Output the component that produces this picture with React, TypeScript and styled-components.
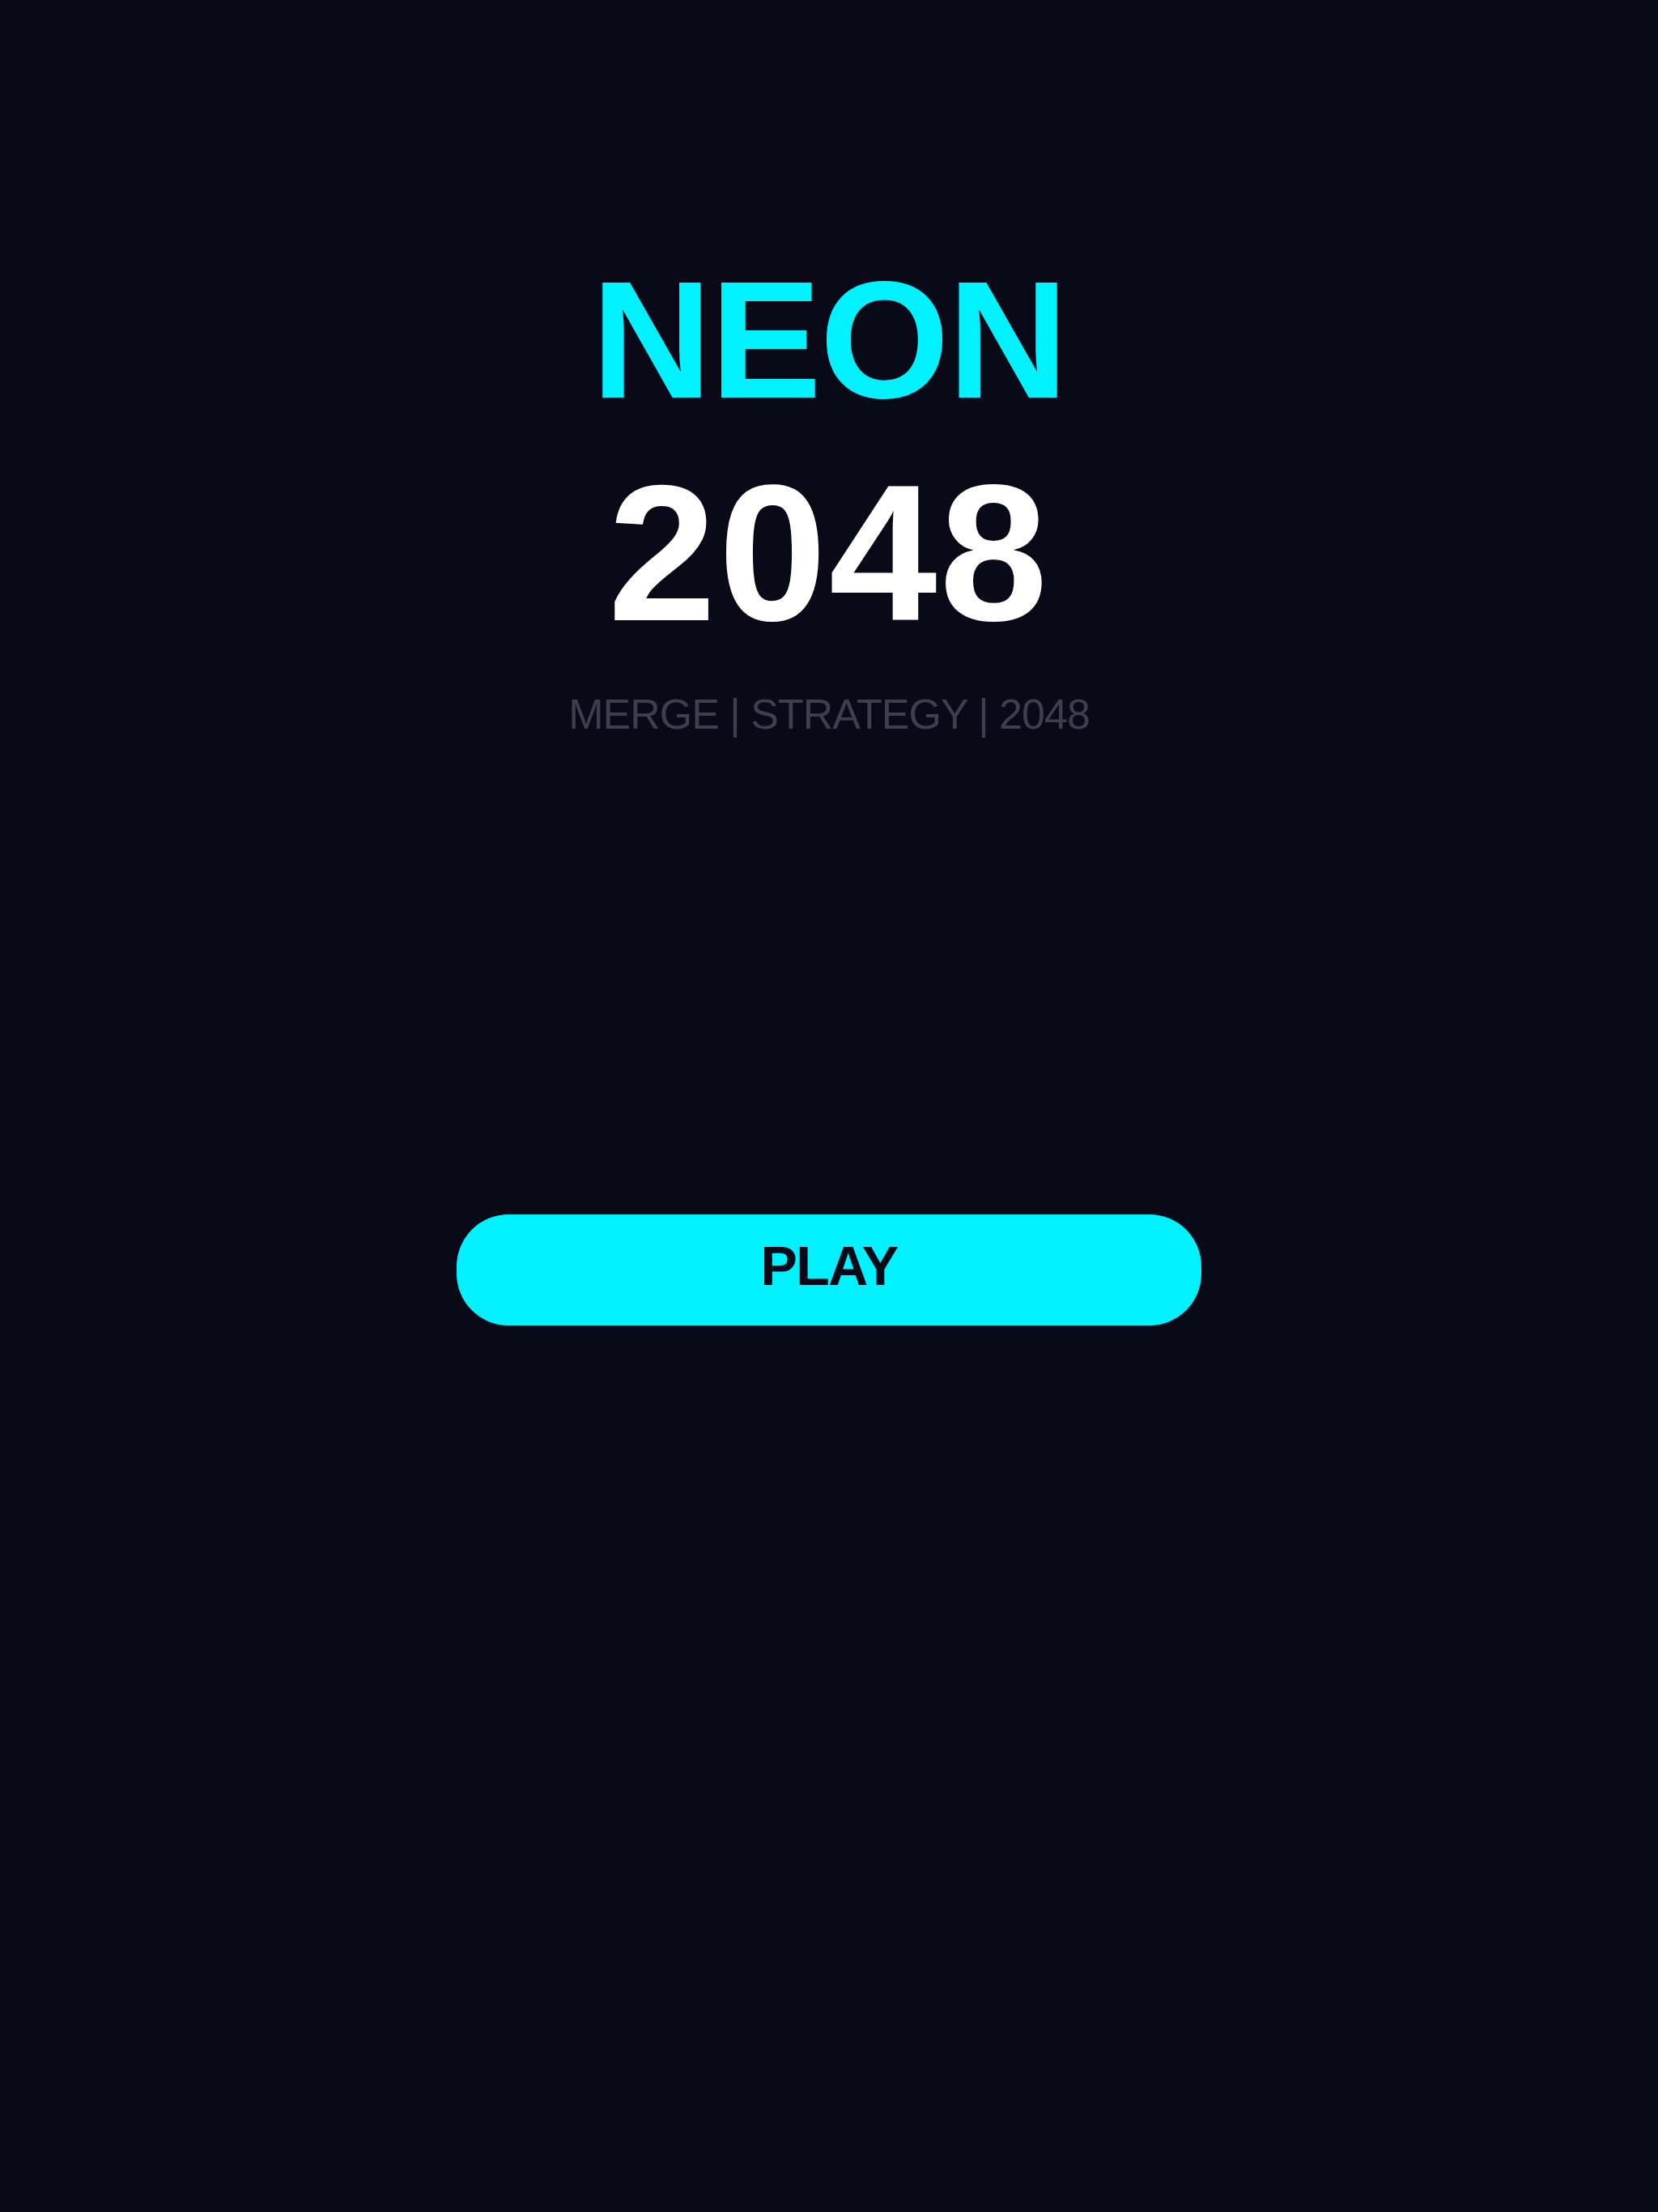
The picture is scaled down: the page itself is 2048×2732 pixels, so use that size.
import React from "react";
import styled, { createGlobalStyle } from "styled-components";

const GlobalStyle = createGlobalStyle`
  html, body {
    margin: 0;
    padding: 0;
    background: #090918;
  }
  body {
    font-family: "Liberation Sans", Arial, Helvetica, sans-serif;
  }
`;

const Screen = styled.div`
  min-height: 2732px;
  background: #090918;
  display: flex;
  flex-direction: column;
  align-items: center;
  padding-top: 317px;
  box-sizing: border-box;
`;

const TitleBlock = styled.div`
  display: flex;
  flex-direction: column;
  align-items: center;
  gap: 40px;
`;

// big stacked heading, colour / size / tracking differ per line
const Title = styled.h1<{ $color: string; $size: number; $track: number }>`
  margin: 0;
  color: ${(p) => p.$color};
  font-size: ${(p) => p.$size}px;
  font-weight: 700;
  line-height: 1;
  letter-spacing: ${(p) => p.$track}px;
`;

const Tagline = styled.p`
  margin: 53px 0 0;
  color: #3c3f51;
  font-size: 52px;
  line-height: 1;
  letter-spacing: -1px;
`;

const PlayButton = styled.button`
  margin-top: 592px;
  width: 920px;
  height: 137px;
  padding: 0 0 12px;
  border: none;
  border-radius: 64px;
  background: #00f2ff;
  color: #090918;
  font-family: "Liberation Sans", Arial, sans-serif;
  font-size: 68px;
  font-weight: 700;
  line-height: 1;
  letter-spacing: -1.5px;
  cursor: pointer;
  display: flex;
  align-items: center;
  justify-content: center;
`;

export default function App() {
  return (
    <>
      <GlobalStyle />
      <Screen>
        <TitleBlock>
          <Title $color="#00f2ff" $size={206} $track={-2}>
            NEON
          </Title>
          <Title $color="#ffffff" $size={240} $track={3}>
            2048
          </Title>
        </TitleBlock>
        <Tagline>MERGE | STRATEGY | 2048</Tagline>
        <PlayButton>PLAY</PlayButton>
      </Screen>
    </>
  );
}
